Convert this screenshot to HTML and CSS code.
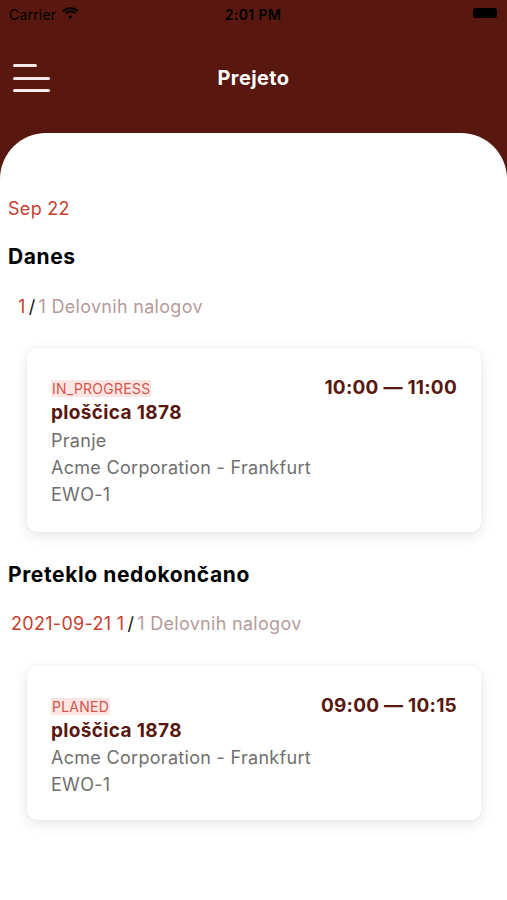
FILE: index.html
```html
<!DOCTYPE html>
<html lang="sl">
<head>
<meta charset="utf-8">
<link rel="stylesheet" href="styles.css">
</head>
<body>
<div class="app">
  <div class="statusbar">
    <div class="sb-left">
      <span class="carrier">Carrier</span>
      <svg class="wifi" width="17" height="12" viewBox="0 0 17 12">
        <path d="M8.5 2.2c2.6 0 5 1 6.8 2.7l1.3-1.4C14.5 1.4 11.6.2 8.5.2S2.5 1.4.4 3.5l1.3 1.4C3.5 3.2 5.9 2.2 8.5 2.2z" fill="#000"/>
        <path d="M8.5 5.4c1.7 0 3.2.6 4.4 1.7l1.3-1.4C12.7 4.3 10.7 3.4 8.5 3.4S4.3 4.3 2.8 5.7l1.3 1.4C5.3 6 6.8 5.4 8.5 5.4z" fill="#000"/>
        <path d="M8.5 8.5c.9 0 1.6.3 2.2.8L8.5 11.7 6.3 9.3c.6-.5 1.3-.8 2.2-.8z" fill="#000"/>
      </svg>
    </div>
    <div class="sb-time">2:01 PM</div>
    <div class="sb-right">
      <div class="battery"></div>
    </div>
  </div>
  <header class="navbar">
    <div class="menu">
      <span class="line short"></span>
      <span class="line"></span>
      <span class="line"></span>
    </div>
    <h1 class="title">Prejeto</h1>
  </header>
  <main class="sheet">
    <div class="date">Sep 22</div>
    <h2 class="section">Danes</h2>
    <div class="count count-today"><span class="red">1</span><span class="slash">/</span><span class="muted">1 Delovnih nalogov</span></div>
    <div class="card card-1">
      <div class="card-top">
        <span class="badge">IN_PROGRESS</span>
        <span class="time">10:00 — 11:00</span>
      </div>
      <div class="name">ploščica 1878</div>
      <div class="info">Pranje</div>
      <div class="info">Acme Corporation - Frankfurt</div>
      <div class="info">EWO-1</div>
    </div>
    <h2 class="section section-past">Preteklo nedokončano</h2>
    <div class="count count-past"><span class="red">2021-09-21 1</span><span class="slash">/</span><span class="muted">1 Delovnih nalogov</span></div>
    <div class="card card-2">
      <div class="card-top">
        <span class="badge">PLANED</span>
        <span class="time">09:00 — 10:15</span>
      </div>
      <div class="name">ploščica 1878</div>
      <div class="info">Acme Corporation - Frankfurt</div>
      <div class="info">EWO-1</div>
    </div>
  </main>
</div>
</body>
</html>
```
FILE: styles.css
```css
* { box-sizing: border-box; }
html, body {
  margin: 0;
  padding: 0;
  background: #ffffff;
}
body {
  font-family: Inter, "Noto Sans", "Liberation Sans", sans-serif;
  width: 507px;
  height: 900px;
  overflow: hidden;
}
.app {
  background: #58180f;
  min-height: 900px;
  display: flex;
  flex-direction: column;
}
.statusbar {
  height: 28px;
  display: flex;
  align-items: center;
  justify-content: space-between;
  padding: 0 10px 0 9px;
  color: #000;
  font-size: 14px;
}
.sb-left {
  display: flex;
  align-items: center;
  gap: 6px;
  width: 120px;
}
.carrier {
  font-weight: 400;
  letter-spacing: 0.2px;
}
.wifi { margin-top: -2px; }
.sb-time {
  font-weight: 600;
  font-size: 14px;
  letter-spacing: 0.4px;
}
.sb-right {
  width: 120px;
  display: flex;
  justify-content: flex-end;
}
.battery {
  width: 24px;
  height: 10px;
  background: #000;
  border-radius: 3px;
  margin-top: -2px;
}
.navbar {
  height: 105px;
  display: flex;
  align-items: flex-start;
  position: relative;
  padding: 36px 0 0 13px;
}
.menu {
  width: 37px;
  display: flex;
  flex-direction: column;
  gap: 9.5px;
}
.line {
  display: block;
  height: 3px;
  width: 37px;
  background: #f7e9e8;
  border-radius: 2px;
}
.line.short { width: 24px; }
.title {
  position: absolute;
  left: 0;
  right: 0;
  top: 37px;
  margin: 0;
  text-align: center;
  color: #ffffff;
  font-size: 20px;
  font-weight: 700;
  line-height: 26px;
  letter-spacing: 0.4px;
}
.sheet {
  flex: 1;
  background: #ffffff;
  border-radius: 46px 46px 0 0;
  padding: 64px 0 0 0;
}
.date {
  color: #c5402e;
  font-size: 18px;
  line-height: 24px;
  padding-left: 8px;
  letter-spacing: 0.3px;
}
.section {
  margin: 0;
  font-size: 21px;
  font-weight: 700;
  color: #000;
  line-height: 28px;
  padding-left: 8px;
  margin-top: 22px;
  letter-spacing: 0.6px;
}
.count {
  font-size: 18px;
  line-height: 24px;
  margin-top: 24px;
  letter-spacing: 0.3px;
}
.count-today { padding-left: 18px; }
.count-past { padding-left: 11px; margin-top: 23px; }
.red { color: #c5402e; }
.slash { color: #111; padding: 0 3px; }
.muted { color: #b59a9a; }
.card {
  margin: 29px 26px 0 27px;
  background: #fff;
  border-radius: 10px;
  box-shadow: 0 4px 14px rgba(0, 0, 0, 0.10), 0 0 3px rgba(0,0,0,0.05);
  padding: 28px 24px 24px 24px;
}
.card-2 { margin-top: 30px; padding-bottom: 22px; }
.card-2 .name { margin-bottom: 0; }
.card-top {
  display: flex;
  justify-content: space-between;
  align-items: center;
}
.badge {
  background: #fde5e3;
  color: #d4564a;
  font-size: 14px;
  line-height: 17px;
  padding: 0 1px;
  letter-spacing: 0.25px;
}
.time {
  color: #58180f;
  font-weight: 700;
  font-size: 19px;
  line-height: 24px;
  letter-spacing: 0.25px;
}
.name {
  color: #58180f;
  font-weight: 700;
  font-size: 19px;
  line-height: 26px;
  margin-bottom: 1px;
  letter-spacing: 0.35px;
}
.info {
  color: #6f6f6f;
  font-size: 18px;
  line-height: 27px;
  letter-spacing: 0.3px;
}
.section-past { margin-top: 29px; }
```
